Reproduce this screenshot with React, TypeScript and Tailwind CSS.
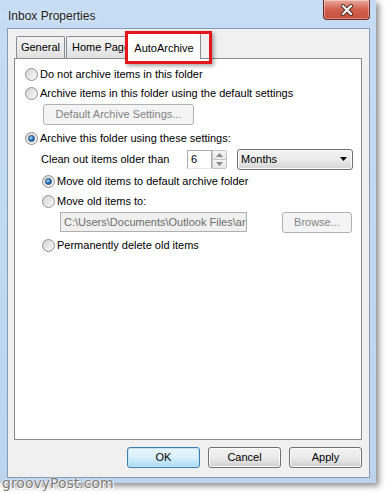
import React from 'react'

function Radio({ checked }: { checked?: boolean }) {
  return (
    <span className="flex h-[13px] w-[13px] shrink-0 items-center justify-center rounded-full border border-[#8e8f8f] bg-gradient-to-br from-[#d4d4d4] to-[#fafafa]">
      {checked && (
        <span className="h-[7px] w-[7px] rounded-full border border-[#1d4a78] bg-[radial-gradient(circle_at_35%_30%,#9fdcff,#2b77c0_55%,#124a84)]" />
      )}
    </span>
  )
}

function RadioRow({ label, checked, className }: { label: string; checked?: boolean; className: string }) {
  return (
    <div className={`flex h-[20px] items-center gap-[2px] whitespace-nowrap ${className}`}>
      <Radio checked={checked} />
      <span>{label}</span>
    </div>
  )
}

function DialogButton({ label, primary, disabled, className }: { label: string; primary?: boolean; disabled?: boolean; className?: string }) {
  return (
    <div
      className={`flex items-center justify-center whitespace-nowrap rounded-[3px] border ${
        primary
          ? 'border-[#3c7fb1] bg-gradient-to-b from-[#eaf6fd] via-[#d9f0fc] to-[#a7d9f5] shadow-[inset_0_0_0_1px_#c1e6fb]'
          : disabled
          ? 'border-[#adb2b5] bg-[#f4f4f4] text-[#838383]'
          : 'border-[#707070] bg-gradient-to-b from-[#f2f2f2] via-[#ebebeb] to-[#cfcfcf] shadow-[inset_0_0_0_1px_#fcfcfc]'
      } ${className ?? ''}`}
    >
      {label}
    </div>
  )
}

export default function App() {
  return (
    <div className="relative h-[494px] w-[387px] overflow-hidden bg-white font-['Liberation_Sans',Arial,sans-serif] text-[11px] text-black">
      {/* Window frame */}
      <div className="flex h-[483px] w-[376px] flex-col bg-gradient-to-b from-[#c5dcf4] to-[#bcd4ee] shadow-[3px_3px_6px_rgba(0,0,0,0.45)]">
        {/* Title bar */}
        <div className="flex h-[28px] items-start justify-between">
          <span className="ml-[8px] mt-[7px] text-[12px] text-[#1e1e1e] [text-shadow:0_0_6px_#fff]">Inbox Properties</span>
          <div className="mr-[6px] flex h-[20px] w-[47px] items-center justify-center rounded-b-[4px] border border-t-0 border-[#6b2a23] bg-gradient-to-b from-[#e9aa9e] via-[#d0604f] to-[#c6503e] shadow-[inset_0_0_0_1px_rgba(255,255,255,0.35)]">
            <svg width="14" height="12" viewBox="0 0 14 12">
              <path d="M3 2 L11 10 M11 2 L3 10" stroke="#4a2a26" strokeWidth="4" strokeLinecap="round" />
              <path d="M3 2 L11 10 M11 2 L3 10" stroke="#fff" strokeWidth="2.2" strokeLinecap="round" />
            </svg>
          </div>
        </div>

        {/* Client area */}
        <div className="ml-[7px] flex h-[450px] w-[363px] flex-col border border-[#8a9bb0] bg-[#f0f0f0] pl-[6px] pr-[7px]">
          {/* Tabs */}
          <div className="mt-[4px] flex h-[25px] items-end whitespace-nowrap pl-[2px]">
            <div className="flex h-[22px] w-[49px] items-center justify-center rounded-t-[2px] border border-b-0 border-[#898c95] bg-gradient-to-b from-[#f4f4f4] to-[#e1e1e1]">
              General
            </div>
            <div className="ml-[1px] flex h-[22px] w-[63px] items-center overflow-hidden rounded-t-[2px] border border-b-0 border-[#898c95] bg-gradient-to-b from-[#f4f4f4] to-[#e1e1e1] pl-[5px]">
              Home Page
            </div>
            <div className="relative z-10 -ml-[2px] -mb-[1px] flex h-[26px] w-[74px] items-start justify-center rounded-t-[2px] border border-b-0 border-[#898c95] bg-white pt-[6px]">
              AutoArchive
              <div className="pointer-events-none absolute -left-[3px] -top-[3px] h-[33px] w-[87px] border-[3px] border-[#e4161b] shadow-[2px_2px_4px_rgba(0,0,0,0.35)]" />
            </div>
          </div>

          {/* Tab panel */}
          <div className="flex h-[382px] flex-col border border-[#898c95] bg-white pt-[5px]">
            <RadioRow label="Do not archive items in this folder" className="ml-[10px]" />
            <RadioRow label="Archive items in this folder using the default settings" className="ml-[10px] -mt-[1px]" />
            <DialogButton label="Default Archive Settings..." disabled className="ml-[28px] mt-[1px] h-[21px] w-[151px]" />
            <RadioRow label="Archive this folder using these settings:" checked className="ml-[10px] mt-[3px]" />

            <div className="ml-[26px] mt-[1px] flex h-[20px] items-center whitespace-nowrap">
              <span className="w-[146px]">Clean out items older than</span>
              <div className="flex h-[19px] w-[25px] items-center border border-[#abadb3] border-b-[#e3e9ef] bg-white pl-[3px]">6</div>
              <div className="flex h-[19px] w-[15px] flex-col">
                <div className="flex flex-1 items-center justify-center rounded-tr-[2px] border border-[#c5c5c5] bg-gradient-to-b from-[#f6f6f6] to-[#e6e6e6]">
                  <svg width="7" height="4" viewBox="0 0 7 4"><path d="M0 4 L3.5 0 L7 4Z" fill="#8a8a8a" /></svg>
                </div>
                <div className="-mt-[1px] flex flex-1 items-center justify-center rounded-br-[2px] border border-[#c5c5c5] bg-gradient-to-b from-[#f6f6f6] to-[#e6e6e6]">
                  <svg width="7" height="4" viewBox="0 0 7 4"><path d="M0 0 L7 0 L3.5 4Z" fill="#8a8a8a" /></svg>
                </div>
              </div>
              <div className="ml-[10px] flex h-[21px] w-[116px] items-center justify-between rounded-[3px] border border-[#707070] bg-gradient-to-b from-[#f2f2f2] via-[#ebebeb] to-[#d5d5d5] pl-[3px] pr-[5px] shadow-[inset_0_0_0_1px_#fcfcfc]">
                <span>Months</span>
                <svg width="7" height="4" viewBox="0 0 7 4"><path d="M0 0 L7 0 L3.5 4Z" fill="#000" /></svg>
              </div>
            </div>

            <RadioRow label="Move old items to default archive folder" checked className="ml-[27px] mt-[2px]" />
            <RadioRow label="Move old items to:" className="ml-[27px]" />

            <div className="ml-[45px] mt-[1px] flex h-[20px] items-center">
              <div className="flex h-[20px] w-[187px] items-center overflow-hidden whitespace-nowrap border border-[#afafaf] bg-[#f0f0f0] pl-[3px] text-[#6d6d6d]">
                C:\Users\Documents\Outlook Files\arc
              </div>
              <DialogButton label="Browse..." disabled className="ml-[35px] h-[21px] w-[70px]" />
            </div>

            <RadioRow label="Permanently delete old items" className="ml-[27px] mt-[3px]" />
          </div>

          {/* Dialog buttons */}
          <div className="mt-[7px] flex justify-end gap-[8px]">
            <DialogButton label="OK" primary className="h-[21px] w-[73px]" />
            <DialogButton label="Cancel" className="h-[21px] w-[73px]" />
            <DialogButton label="Apply" className="h-[21px] w-[73px]" />
          </div>
        </div>
      </div>

      {/* watermark */}
      <span className="absolute left-[2px] top-[476px] whitespace-nowrap font-['DejaVu_Sans',sans-serif] text-[14px] leading-none text-[#7b7b7b] [text-shadow:0_0_1px_#fff,0_0_2px_#fff,1px_1px_0_#fff]">
        groovyPost.com
      </span>
    </div>
  )
}
